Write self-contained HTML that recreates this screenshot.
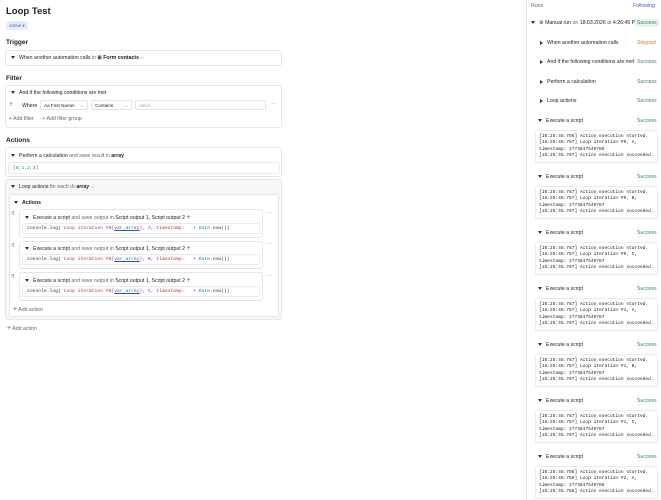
<!DOCTYPE html>
<html><head><meta charset="utf-8"><style>
*{box-sizing:border-box;margin:0;padding:0}
body{width:661px;height:500px;overflow:hidden;background:#fff;font-family:"Liberation Sans",sans-serif;color:#222;font-size:5.2px;position:relative}
.a{position:absolute;white-space:nowrap}
.h{font-size:6.5px;font-weight:bold;color:#222}
.card{position:absolute;border:1px solid #e6e6e6;border-radius:3px;background:#fff}
.tri{display:inline-block;width:0;height:0;border-left:2.2px solid transparent;border-right:2.2px solid transparent;border-top:3px solid #333;margin-right:4px;vertical-align:middle}
.trr{display:inline-block;width:0;height:0;border-top:2.2px solid transparent;border-bottom:2.2px solid transparent;border-left:3px solid #333;margin-right:4px;vertical-align:middle}
.b{font-weight:bold}
.g{color:#666}
.code{position:absolute;border:1px solid #ececec;border-radius:2px;background:#fff;font-family:"Liberation Mono",monospace;font-size:4.7px;padding:3px 4px;color:#333;white-space:nowrap}
.s{color:#b33}.v{color:#2a5db0;text-decoration:underline}.t{color:#1a8a8a}
.ok{color:#2f8a5e}
.log{position:absolute;left:535px;width:123px;height:33px;border:1px solid #ececec;border-radius:2px;font-family:"Liberation Mono",monospace;font-size:4.55px;line-height:6.3px;padding:3px 3px;color:#222;white-space:pre;overflow:hidden}
.dots{position:absolute;color:#888;font-size:6px;letter-spacing:-0.5px}
.inp{position:absolute;border:1px solid #e3e3e3;border-radius:2px;height:10px;padding:2px 3px;font-size:4.6px}
</style></head><body>

<div class="a" style="left:6px;top:6px;font-size:9.5px;font-weight:bold">Loop Test</div>
<div class="a" style="left:6px;top:21px;width:22px;height:9px;background:#e6edf8;border-radius:2px;color:#3a64b8;font-size:4.5px;padding:2px 3px">Active ▾</div>

<div class="a h" style="left:6px;top:39px">Trigger</div>
<div class="card" style="left:5px;top:50px;width:277px;height:16px"></div>
<div class="a" style="left:11px;top:55px"><span class="tri"></span>When another automation calls <span class="g">in</span> <span class="b">⊞ Form contacts</span> <span class="g">⌵</span></div>

<div class="a h" style="left:6px;top:75px">Filter</div>
<div class="card" style="left:5px;top:85px;width:277px;height:43px"></div>
<div class="a" style="left:11px;top:90px"><span class="tri"></span>And if the following conditions are met</div>
<div class="a g" style="left:9px;top:102px;font-size:5px">⠿</div>
<div class="a" style="left:22px;top:103px">Where</div>
<div class="inp" style="left:40px;top:100px;width:48px">Aa First Name! <span class="g" style="float:right">⌵</span></div>
<div class="inp" style="left:91px;top:100px;width:41px">Contains <span class="g" style="float:right">⌵</span></div>
<div class="inp g" style="left:135px;top:100px;width:131px;color:#aaa">Value</div>
<div class="dots" style="left:271px;top:101px">···</div>
<div class="a g" style="left:9px;top:116px">+ Add filter &nbsp;&nbsp;&nbsp;&nbsp; + Add filter group</div>

<div class="a h" style="left:6px;top:137px">Actions</div>
<div class="card" style="left:5px;top:147px;width:277px;height:30px"></div>
<div class="a" style="left:11px;top:153px"><span class="tri"></span>Perform a calculation <span class="g">and save result in</span> <span class="b">array</span></div>
<div class="code" style="left:8px;top:162px;width:272px;height:12px;color:#1a8a8a">[0,1,2,3]</div>

<div class="card" style="left:5px;top:179px;width:277px;height:141px;background:#f7f7f7"></div>
<div class="a" style="left:11px;top:184px"><span class="tri"></span>Loop actions <span class="g">for each</span> ‹/› <span class="b">array</span> <span class="g">⌵</span></div>
<div class="card" style="left:9px;top:194px;width:270px;height:123px"></div>
<div class="a" style="left:14px;top:200px"><span class="tri"></span><span class="b">Actions</span></div>

<div class="a g" style="left:11px;top:211px">⠿</div>
<div class="card" style="left:19px;top:209px;width:244px;height:29px"></div>
<div class="a" style="left:25px;top:214px"><span class="tri"></span>Execute a script <span class="g">and save output in</span> Script output 1, Script output 2 <span class="g" style="font-size:7px">+</span></div>
<div class="code" style="left:22px;top:223px;width:238px;height:11px;padding-top:2px">console.log(<span class="s">`Loop iteration #${</span><span class="v">var_array</span><span class="s">}, A, timestamp: `</span> + <span class="t">Date</span>.now())</div>
<div class="dots" style="left:267px;top:210px">···</div>

<div class="a g" style="left:11px;top:243px">⠿</div>
<div class="card" style="left:19px;top:241px;width:244px;height:28px"></div>
<div class="a" style="left:25px;top:245px"><span class="tri"></span>Execute a script <span class="g">and save output in</span> Script output 1, Script output 2 <span class="g" style="font-size:7px">+</span></div>
<div class="code" style="left:22px;top:254px;width:238px;height:11px;padding-top:2px">console.log(<span class="s">`Loop iteration #${</span><span class="v">var_array</span><span class="s">}, B, timestamp: `</span> + <span class="t">Date</span>.now())</div>
<div class="dots" style="left:267px;top:241px">···</div>

<div class="a g" style="left:11px;top:274px">⠿</div>
<div class="card" style="left:19px;top:272px;width:244px;height:29px"></div>
<div class="a" style="left:25px;top:277px"><span class="tri"></span>Execute a script <span class="g">and save output in</span> Script output 1, Script output 2 <span class="g" style="font-size:7px">+</span></div>
<div class="code" style="left:22px;top:286px;width:238px;height:11px;padding-top:2px">console.log(<span class="s">`Loop iteration #${</span><span class="v">var_array</span><span class="s">}, C, timestamp: `</span> + <span class="t">Date</span>.now())</div>
<div class="dots" style="left:267px;top:273px">···</div>

<div class="a g" style="left:13px;top:306px"><span style="font-size:7px">+</span> Add action</div>
<div class="a g" style="left:7px;top:325px"><span style="font-size:7px">+</span> Add action</div>

<!-- right panel -->
<div style="position:absolute;left:526px;top:0;width:1px;height:500px;background:#e8e8e8"></div>
<div class="a g" style="left:531px;top:3px">Runs</div>
<div class="a" style="left:633px;top:3px;color:#3a64b8">Following</div>
<div class="a" style="left:531px;top:20px"><span class="tri"></span>⚙ Manual run <span class="g">on</span> 18.03.2026 <span class="g">at</span> 4:26:45 PI</div>
<div class="a ok" style="left:635px;top:19px;background:#e6f4ec;padding:1px 2px;border-radius:2px">Success</div>

<div class="a" style="left:540px;top:40px"><span class="trr"></span>When another automation calls</div><div class="a" style="left:637px;top:40px;color:#d5802e">Skipped</div>
<div class="a" style="left:540px;top:59px"><span class="trr"></span>And if the following conditions are met</div><div class="a ok" style="left:637px;top:59px">Success</div>
<div class="a" style="left:540px;top:79px"><span class="trr"></span>Perform a calculation</div><div class="a ok" style="left:637px;top:79px">Success</div>
<div class="a" style="left:540px;top:98px"><span class="trr"></span>Loop actions</div><div class="a ok" style="left:637px;top:98px">Success</div>

<div class="a" style="left:538px;top:118px"><span class="tri"></span>Execute a script</div><div class="a ok" style="left:637px;top:118px">Success</div>
<div class="log" style="top:130px">[16:25:45.786] Action execution started.
[16:25:45.787] Loop iteration #0, A,
timestamp: 1773847545786
[16:25:45.787] Action execution succeeded.</div>

<div class="a" style="left:538px;top:174px"><span class="tri"></span>Execute a script</div><div class="a ok" style="left:637px;top:174px">Success</div>
<div class="log" style="top:186px">[16:25:45.787] Action execution started.
[16:25:45.787] Loop iteration #0, B,
timestamp: 1773847545787
[16:25:45.787] Action execution succeeded.</div>

<div class="a" style="left:538px;top:230px"><span class="tri"></span>Execute a script</div><div class="a ok" style="left:637px;top:230px">Success</div>
<div class="log" style="top:242px">[16:25:45.787] Action execution started.
[16:25:45.787] Loop iteration #0, C,
timestamp: 1773847545787
[16:25:45.787] Action execution succeeded.</div>

<div class="a" style="left:538px;top:286px"><span class="tri"></span>Execute a script</div><div class="a ok" style="left:637px;top:286px">Success</div>
<div class="log" style="top:298px">[16:25:45.787] Action execution started.
[16:25:45.787] Loop iteration #1, A,
timestamp: 1773847545787
[16:25:45.787] Action execution succeeded.</div>

<div class="a" style="left:538px;top:342px"><span class="tri"></span>Execute a script</div><div class="a ok" style="left:637px;top:342px">Success</div>
<div class="log" style="top:354px">[16:25:45.787] Action execution started.
[16:25:45.787] Loop iteration #1, B,
timestamp: 1773847545787
[16:25:45.787] Action execution succeeded.</div>

<div class="a" style="left:538px;top:398px"><span class="tri"></span>Execute a script</div><div class="a ok" style="left:637px;top:398px">Success</div>
<div class="log" style="top:410px">[16:25:45.787] Action execution started.
[16:25:45.787] Loop iteration #1, C,
timestamp: 1773847545787
[16:25:45.787] Action execution succeeded.</div>

<div class="a" style="left:538px;top:454px"><span class="tri"></span>Execute a script</div><div class="a ok" style="left:637px;top:454px">Success</div>
<div class="log" style="top:466px">[16:25:45.788] Action execution started.
[16:25:45.788] Loop iteration #2, A,
timestamp: 1773847545788
[16:25:45.788] Action execution succeeded.</div>

</body></html>
